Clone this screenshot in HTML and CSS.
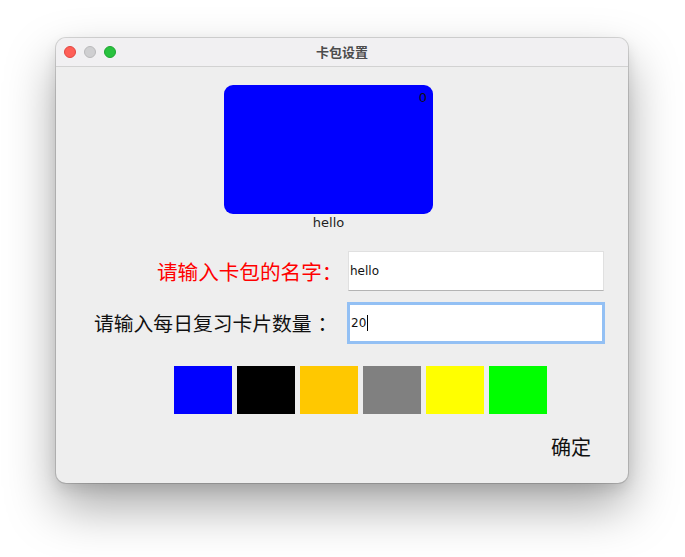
FILE: index.html
```html
<!DOCTYPE html>
<html lang="zh">
<head>
<meta charset="utf-8">
<title>卡包设置</title>
<link rel="stylesheet" href="styles.css">
</head>
<body>
<div class="window">
  <div class="titlebar">
    <div class="lights">
      <span class="light red"></span>
      <span class="light grey"></span>
      <span class="light green"></span>
    </div>
    <div class="title">卡包设置</div>
  </div>
  <div class="content">
    <div class="preview">
      <div class="card"><span class="count">0</span></div>
      <div class="caption">hello</div>
    </div>
    <div class="form">
      <label class="label label-red">请输入卡包的名字<span class="colon">：</span></label>
      <div class="field">hello</div>
      <label class="label label-black">请输入每日复习卡片数量<span class="colon colon-wide">：</span></label>
      <div class="field field-focus">20<span class="caret"></span></div>
    </div>
    <div class="swatches">
      <span class="swatch sw-blue"></span>
      <span class="swatch sw-black"></span>
      <span class="swatch sw-orange"></span>
      <span class="swatch sw-grey"></span>
      <span class="swatch sw-yellow"></span>
      <span class="swatch sw-green"></span>
    </div>
    <div class="actions">
      <button class="ok">确定</button>
    </div>
  </div>
</div>
</body>
</html>
```
FILE: styles.css
```css
html, body {
  margin: 0;
  padding: 0;
}
body {
  width: 685px;
  height: 557px;
  overflow: hidden;
  background: #ffffff;
  font-family: "DejaVu Sans", "Noto Sans CJK SC", sans-serif;
}
.window {
  margin: 38px 0 0 56px;
  width: 572px;
  height: 445px;
  border-radius: 10px;
  background: #eeeeee;
  box-shadow: 0 0 0 1px rgba(0,0,0,0.14), 0 24px 50px rgba(0,0,0,0.34), 0 6px 14px rgba(0,0,0,0.10);
  overflow: hidden;
}
.titlebar {
  height: 28px;
  border-bottom: 1px solid #d2d2d2;
  background: #f1f0f2;
  display: flex;
  align-items: center;
  position: relative;
}
.lights {
  display: flex;
  gap: 8px;
  padding-left: 8px;
}
.light {
  width: 12px;
  height: 12px;
  border-radius: 50%;
  box-sizing: border-box;
}
.red { background: #fe5f57; border: 0.5px solid #e14640; }
.grey { background: #cfcfd1; border: 0.5px solid #b9b9bb; }
.green { background: #29c23f; border: 0.5px solid #1ea631; }
.title {
  position: absolute;
  left: 0;
  right: 0;
  text-align: center;
  font-family: "Noto Sans CJK SC", sans-serif;
  font-size: 13px;
  font-weight: 600;
  color: #4c4c4c;
  line-height: 28px;
}
.content {
  padding-top: 18px;
}
.preview {
  margin-left: 168px;
  width: 209px;
}
.card {
  width: 209px;
  height: 129px;
  background: #0000ff;
  border-radius: 9px;
  display: flex;
  justify-content: flex-end;
}
.count {
  font-size: 13px;
  line-height: 16px;
  color: #111;
  margin: 5px 6px 0 0;
}
.caption {
  text-align: center;
  font-size: 13px;
  line-height: 17px;
  color: #1e1e1e;
}
.form {
  margin-top: 20px;
  display: grid;
  grid-template-columns: 292px 256px;
  row-gap: 11px;
  align-items: center;
}
.label {
  font-family: "Noto Sans CJK SC", sans-serif;
  white-space: nowrap;
  line-height: 28px;
}
.colon-wide {
  margin-left: 6px;
}
.label-red {
  color: #ff0000;
  font-size: 20.6px;
  padding-left: 101px;
}
.label-black {
  color: #111;
  font-size: 19.8px;
  padding-left: 38px;
}
.field {
  box-sizing: border-box;
  height: 40px;
  background: #ffffff;
  border: 1px solid #e0e0e0;
  border-bottom-color: #b4b4b4;
  padding-left: 1px;
  display: flex;
  align-items: center;
  font-size: 12px;
  color: #111;
}
.field-focus {
  width: 258px;
  height: 42px;
  margin-left: -1px;
  border: 3px solid #93c0f4;
  padding-left: 1px;
}
.caret {
  display: inline-block;
  width: 1px;
  height: 16px;
  background: #000;
  margin-left: 1px;
}
.swatches {
  margin: 22px 0 0 118px;
  display: flex;
  gap: 5px;
}
.swatch {
  width: 58px;
  height: 48px;
}
.sw-blue { background: #0000ff; }
.sw-black { background: #000000; }
.sw-orange { background: #ffc800; }
.sw-grey { background: #808080; }
.sw-yellow { background: #ffff00; }
.sw-green { background: #00ff00; }
.actions {
  margin: 20px 0 0 495px;
}
.ok {
  border: none;
  background: transparent;
  padding: 0;
  font-family: "Noto Sans CJK SC", sans-serif;
  font-size: 20px;
  line-height: 26px;
  color: #111;
}
```
